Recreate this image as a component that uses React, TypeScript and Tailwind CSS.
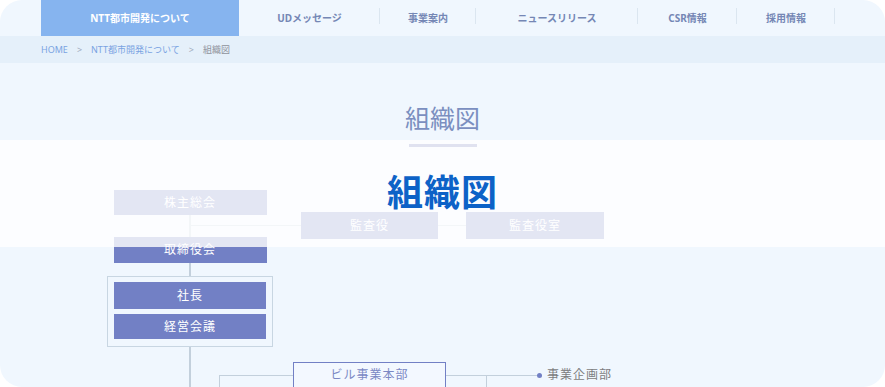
const font = { fontFamily: '"Noto Sans", "Noto Sans CJK JP", sans-serif' };

const navItems = [
  { label: "UDメッセージ", w: "w-[141px]" },
  { label: "事業案内", w: "w-[96px]" },
  { label: "ニュースリリース", w: "w-[162px]" },
  { label: "CSR情報", w: "w-[99px]" },
  { label: "採用情報", w: "w-[98px]" },
];

function Node({ label, className }: { label: string; className: string }) {
  return (
    <div
      className={`flex shrink-0 items-center justify-center bg-[#7280c5] text-[12px] tracking-[1px] text-white ${className}`}
    >
      {label}
    </div>
  );
}

function Line({ className }: { className: string }) {
  return <div className={`shrink-0 bg-[#c3d0dc] ${className}`} />;
}

export default function App() {
  return (
    <div className="h-[387px] w-[885px] bg-white" style={font}>
      <div className="relative h-[387px] w-full overflow-hidden rounded-[22px] bg-[#f0f7fe]">
        {/* global nav */}
        <nav className="flex h-[36px] pl-[41px]">
          <div className="flex w-[198px] items-center justify-center bg-[#86b4ef] text-[10px] font-bold text-white">
            NTT都市開発について
          </div>
          {navItems.map((item) => (
            <div
              key={item.label}
              className={`relative flex items-center justify-center text-[10px] font-bold text-[#7587b5] ${item.w}`}
            >
              {item.label}
              <span className="absolute right-0 top-[8px] h-[16px] w-px bg-[#dbe6f0]" />
            </div>
          ))}
        </nav>

        {/* breadcrumb */}
        <div className="flex h-[27px] items-center gap-[9px] bg-[#e5f0fa] pl-[41px] text-[9px]">
          <span className="text-[#7aa3e2]">HOME</span>
          <span className="text-[#a0aabb]">&gt;</span>
          <span className="text-[#7aa3e2]">NTT都市開発について</span>
          <span className="text-[#a0aabb]">&gt;</span>
          <span className="text-[#8f939c]">組織図</span>
        </div>

        {/* page title */}
        <div className="flex h-[77px] items-end justify-center pb-[9px]">
          <h1 className="text-[25px] leading-none text-[#7b8fc0]">組織図</h1>
        </div>

        {/* chart */}
        <div className="relative h-[247px]">
          {/* main column */}
          <div className="absolute left-[107px] top-[50px] flex w-[166px] flex-col items-center">
            <Node label="株主総会" className="h-[25px] w-[153px]" />
            <Line className="h-[22px] w-[2px]" />
            <Node label="取締役会" className="h-[26px] w-[153px]" />
            <Line className="h-[13px] w-[2px]" />
            <div className="flex h-[71px] w-[166px] flex-col gap-[5px] border border-[#c8d6e2] px-[6px] pt-[5px]">
              <Node label="社長" className="h-[27px]" />
              <Node label="経営会議" className="h-[25px]" />
            </div>
            <Line className="h-[40px] w-[2px]" />
          </div>

          {/* auditors */}
          <div className="absolute left-[191px] top-[72px] flex items-center">
            <Line className="h-px w-[110px]" />
            <Node label="監査役" className="h-[27px] w-[137px]" />
            <Line className="h-px w-[28px]" />
            <Node label="監査役室" className="h-[27px] w-[138px]" />
          </div>

          {/* business division row */}
          <div className="absolute left-[219px] top-[222px] flex items-start">
            <div className="mt-[13px] h-[12px] w-[74px] border-l border-t border-[#c3d0dc]" />
            <div className="flex h-[26px] w-[153px] items-center justify-center border border-[#7280c5] bg-[#f3f8ff] text-[12px] tracking-[1px] text-[#7b88c4]">
              ビル事業本部
            </div>
            <div className="mt-[13px] flex items-start">
              <div className="h-[12px] w-[41px] border-r border-t border-[#c3d0dc]" />
              <Line className="h-px w-[50px]" />
              <span className="-mt-[2px] h-[5px] w-[5px] rounded-full bg-[#7280c5]" />
              <span className="-mt-[9px] ml-[5px] text-[12px] leading-[18px] tracking-[1px] text-[#7d7d80]">
                事業企画部
              </span>
            </div>
          </div>
        </div>

        {/* sticky heading overlay */}
        <div className="absolute left-0 top-[140px] flex h-[107px] w-full flex-col items-center bg-white/80">
          <div className="mt-[4px] h-[3px] w-[68px] bg-[#e0e2f0]" />
          <h2 className="mt-[28px] text-[36px] font-bold leading-none tracking-[1px] text-[#0d62c7]">
            組織図
          </h2>
        </div>
      </div>
    </div>
  );
}
